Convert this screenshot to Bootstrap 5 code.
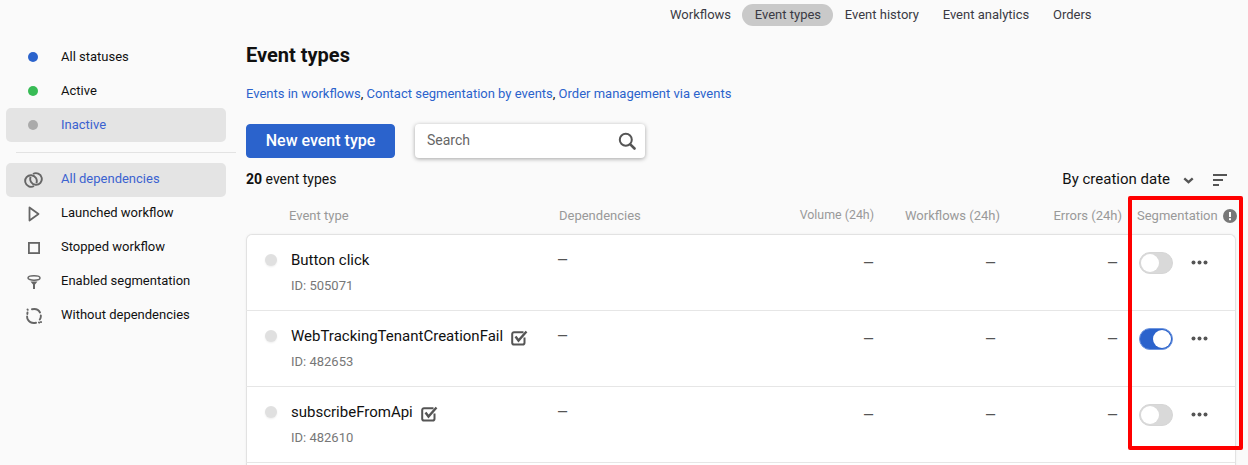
<!DOCTYPE html>
<html lang="en">
<head>
<meta charset="utf-8">
<title>Event types</title>
<link href="https://cdn.jsdelivr.net/npm/bootstrap@5.3.0/dist/css/bootstrap.min.css" rel="stylesheet">
<style>
html,body{height:465px;overflow:hidden}
body{background:#fafafa;font-family:Roboto,"Liberation Sans",sans-serif;font-size:13px;color:#111;position:relative}
a{text-decoration:none}
.topnav{height:29px;padding:4px 0 0 658px;gap:0}
.topnav a{display:block;height:22px;line-height:21px;padding:0 12px;color:#3a3a44;font-size:13px;border-radius:11px}
.topnav a:nth-child(n+2){margin-left:-.3px}
.topnav a.cur{background:#c9c9c9;padding-left:13px;margin-left:-1.3px}
.shell{display:flex}
.side{width:246px;flex:none;padding:11px 0 0 6px}
.sitem{display:flex;align-items:center;width:220px;height:34px;border-radius:5px;color:#111}
.sitem.cur{background:#e4e4e4;color:#3b62d0}
.sgroup2 .sitem{padding-bottom:2px}
.sgroup2 .sico{padding-top:2px}
.sico{width:55px;flex:none;display:flex;justify-content:center;color:#666}
.sdot{width:10px;height:10px;border-radius:50%;margin-left:-1px}
.sep{height:1px;background:#e3e3e3;margin:10px 0 10px 10px;width:220px}
.main{width:990px;flex:none}
.ttl{font-size:20px;font-weight:700;line-height:24px;margin:14px 0 0;color:#111}
.lnks{margin:19px 0 0;line-height:16px;color:#111;height:16px}
.lnks a{color:#2b63cc}
.acts{margin-top:22px;gap:20px}
.newbtn{width:149px;height:34px;padding:0 0 1px;background:#2b63cc;border-color:#2b63cc;font-size:16px;font-weight:500;line-height:30px;border-radius:4px}
.srch{width:230px;height:34px;background:#fff;border-radius:4px;box-shadow:0 1px 4px rgba(0,0,0,.35);padding:0 9px 1px 12px;color:#666;font-size:14px}
.srch svg{margin-top:1px}
.cnt{margin-top:13px;height:17px;line-height:17px;font-size:14px}
.sorter{font-size:15px;color:#111;margin-right:1px}
.schev{margin:2px 19px 0 13px}
.gridr{display:grid;grid-template-columns:43px 268px 206px 111px 126px 122px 1fr}
.hdr{height:39px;margin-top:7px;align-items:center;color:#999;font-size:13px;padding-top:2px}
.hdr .seg{padding-left:15px;display:flex;align-items:center;gap:5px;white-space:nowrap}
.hdep{padding-left:2px}
.hvol{font-size:12.4px}
.tr{text-align:right}
.tbl{background:#fff;border:1px solid #e2e2e2;border-bottom:0;border-radius:6px 6px 0 0;box-shadow:0 0 3px rgba(0,0,0,.05)}
.rw{height:76px;border-bottom:1px solid #e6e6e6;margin-left:-1px;padding-top:15px;align-items:start}
.rw.tail{height:3px;padding:0;border:0}
.rdot{width:12px;height:12px;border-radius:50%;background:#e0e0e0;margin:4px 0 0 19px;box-shadow:0 1px 2px rgba(0,0,0,.07)}
.nm{font-size:15px;line-height:21px;color:#111;padding-left:2px;display:flex;align-items:center;gap:8px;white-space:nowrap}
.nm svg{margin-top:2px}
.rid{font-size:13px;color:#777;line-height:16px;margin-top:7px;padding-left:2px}
.dsh{color:#555;line-height:20px;font-size:14px}
.dsh.r{text-align:right;padding:3px 4px 0 0}
.dsh.v{padding-right:0}
.ctl{padding-left:17px;display:flex;align-items:center;gap:18px;height:24px;margin-top:1px}
.form-switch{padding:0;margin:0;min-height:0;display:flex}
.form-switch .form-check-input.tgl{width:34px;height:22px;margin:0;border:1px solid #d6d6d6;background-color:#d9d9d9;background-size:20px 20px;background-position:left center;background-image:url("data:image/svg+xml,%3csvg xmlns='http://www.w3.org/2000/svg' viewBox='0 0 20 20'%3e%3ccircle cx='10' cy='10' r='9' fill='%23fff'/%3e%3c/svg%3e");border-radius:11px}
.form-switch .form-check-input.tgl:checked{background-color:#2b63cc;border-color:#6f96de;background-position:right center}
.more{display:block;margin-top:-2px}
.annot{position:absolute;left:1128px;top:196px;width:115px;height:254px;border:4px solid #f00;border-radius:2px;pointer-events:none}
</style>
</head>
<body>
<nav class="nav topnav">
  <a href="#">Workflows</a><a href="#" class="cur">Event types</a><a href="#">Event history</a><a href="#">Event analytics</a><a href="#">Orders</a>
</nav>
<div class="shell">
  <aside class="side">
    <div>
      <a href="#" class="sitem"><span class="sico"><span class="sdot" style="background:#2b63cc"></span></span>All statuses</a>
      <a href="#" class="sitem"><span class="sico"><span class="sdot" style="background:#37bb55"></span></span>Active</a>
      <a href="#" class="sitem cur"><span class="sico"><span class="sdot" style="background:#aaa"></span></span>Inactive</a>
    </div>
    <div class="sep"></div>
    <div class="sgroup2">
    <a href="#" class="sitem cur"><span class="sico"><svg width="19" height="16" viewBox="0 0 19 16" fill="none" stroke="#666" stroke-width="1.900"><path d="M12.350 11.230A5.800 5.800 0 1 0 10.020 13.950"/><path d="M8.980 2.050A5.800 5.800 0 1 1 6.650 4.770"/></svg></span>All dependencies</a>
    <a href="#" class="sitem"><span class="sico"><svg width="12" height="16" viewBox="0 0 12 16" fill="none" stroke="#666" stroke-width="1.800" stroke-linejoin="round"><path d="M1.500 1.500 10.500 8 1.500 14.500Z"/></svg></span>Launched workflow</a>
    <a href="#" class="sitem"><span class="sico"><svg width="12" height="12" viewBox="0 0 12 12" fill="none" stroke="#666" stroke-width="1.800"><rect x=".9" y=".9" width="10.200" height="10.200"/></svg></span>Stopped workflow</a>
    <a href="#" class="sitem"><span class="sico"><svg width="14" height="14" viewBox="0 0 14 14" fill="none"><ellipse cx="7" cy="3" rx="6" ry="2.200" stroke="#666" stroke-width="1.500"/><path d="M3.500 6.500h7L8 9.500V14H6V9.500Z" fill="#666"/></svg></span>Enabled segmentation</a>
    <a href="#" class="sitem"><span class="sico"><svg width="16" height="16" viewBox="0 0 16 16" fill="none" stroke="#666" stroke-width="1.900" stroke-linecap="round"><path d="M6 1.300C9 .7 12.500 1.500 14 4.500"/><path d="M1.500 1.500 1.800 1.800M1.500 4.500 1.300 6"/><path d="M14.800 7.500C15 9 14.500 10.500 13.800 11.500"/><path d="M10 14.800C6.500 15.500 3.500 14.500 1.800 11.500 1.200 10.500 1.100 9.500 1.100 8.500"/><path d="M13 14.500 13.200 14.700M15 14 15.100 14.100"/></svg></span>Without dependencies</a>
    </div>
  </aside>
  <main class="main">
    <h1 class="ttl">Event types</h1>
    <p class="lnks"><a href="#">Events in workflows</a>, <a href="#">Contact segmentation by events</a>, <a href="#">Order management via events</a></p>
    <div class="d-flex acts">
      <button type="button" class="btn btn-primary newbtn">New event type</button>
      <div class="srch d-flex align-items-center justify-content-between"><span>Search</span>
        <svg width="18" height="18" viewBox="0 0 18 18" fill="none" stroke="#555" stroke-width="2"><circle cx="7.800" cy="7.800" r="6"/><path d="M12.300 12.300 16.500 16.500" stroke-width="2.600" stroke-linecap="round"/></svg>
      </div>
    </div>
    <div class="d-flex justify-content-between align-items-center cnt">
      <div><b>20</b> event types</div>
      <div class="d-flex align-items-center sorter"><span>By creation date</span>
        <svg class="schev" width="11" height="7" viewBox="0 0 13 8" fill="none" stroke="#555" stroke-width="2.800"><path d="M1.500 1.500 6.500 6 11.500 1.500"/></svg>
        <svg class="me-2" width="14" height="12" viewBox="0 0 14 12" fill="#555"><rect width="14" height="2"/><rect y="5" width="10" height="2"/><rect y="10" width="6" height="2"/></svg>
      </div>
    </div>
    <div class="gridr hdr">
      <span></span><span>Event type</span><span class="hdep">Dependencies</span><span class="tr hvol">Volume (24h)</span><span class="tr">Workflows (24h)</span><span class="tr">Errors (24h)</span>
      <span class="seg">Segmentation
        <svg width="14" height="14" viewBox="0 0 14 14"><circle cx="7" cy="7" r="7" fill="#777"/><rect x="6" y="3" width="2" height="5" fill="#fff"/><rect x="6" y="9.200" width="2" height="2" fill="#fff"/></svg>
      </span>
    </div>
    <div class="tbl">
      <div class="gridr rw">
        <span class="rdot"></span>
        <div><div class="nm">Button click</div><div class="rid">ID: 505071</div></div>
        <span class="dsh">—</span><span class="dsh r v">—</span><span class="dsh r">—</span><span class="dsh r">—</span>
        <div class="ctl"><div class="form-check form-switch"><input class="form-check-input tgl" type="checkbox" role="switch" aria-label="Segmentation"></div>
          <svg class="more" width="17" height="5" viewBox="0 0 17 5" fill="#555"><circle cx="2.500" cy="2.500" r="2"/><circle cx="8.500" cy="2.500" r="2"/><circle cx="14.500" cy="2.500" r="2"/></svg></div>
      </div>
      <div class="gridr rw">
        <span class="rdot"></span>
        <div><div class="nm">WebTrackingTenantCreationFail
          <svg width="17" height="16" viewBox="0 0 17 16" fill="none" stroke="#555" stroke-width="2"><path d="M13.500 7.500v5.300a1.800 1.800 0 0 1-1.800 1.800H3a1.800 1.800 0 0 1-1.800-1.800V4A1.800 1.800 0 0 1 3 2.200h9.500"/><path d="M4.500 6.500 7.500 10.500 15.500 1.500" stroke-width="2.400"/></svg></div><div class="rid">ID: 482653</div></div>
        <span class="dsh">—</span><span class="dsh r v">—</span><span class="dsh r">—</span><span class="dsh r">—</span>
        <div class="ctl"><div class="form-check form-switch"><input class="form-check-input tgl" type="checkbox" role="switch" aria-label="Segmentation" checked></div>
          <svg class="more" width="17" height="5" viewBox="0 0 17 5" fill="#555"><circle cx="2.500" cy="2.500" r="2"/><circle cx="8.500" cy="2.500" r="2"/><circle cx="14.500" cy="2.500" r="2"/></svg></div>
      </div>
      <div class="gridr rw">
        <span class="rdot"></span>
        <div><div class="nm">subscribeFromApi
          <svg width="17" height="16" viewBox="0 0 17 16" fill="none" stroke="#555" stroke-width="2"><path d="M13.500 7.500v5.300a1.800 1.800 0 0 1-1.800 1.800H3a1.800 1.800 0 0 1-1.800-1.800V4A1.800 1.800 0 0 1 3 2.200h9.500"/><path d="M4.500 6.500 7.500 10.500 15.500 1.500" stroke-width="2.400"/></svg></div><div class="rid">ID: 482610</div></div>
        <span class="dsh">—</span><span class="dsh r v">—</span><span class="dsh r">—</span><span class="dsh r">—</span>
        <div class="ctl"><div class="form-check form-switch"><input class="form-check-input tgl" type="checkbox" role="switch" aria-label="Segmentation"></div>
          <svg class="more" width="17" height="5" viewBox="0 0 17 5" fill="#555"><circle cx="2.500" cy="2.500" r="2"/><circle cx="8.500" cy="2.500" r="2"/><circle cx="14.500" cy="2.500" r="2"/></svg></div>
      </div>
      <div class="gridr rw tail"></div>
    </div>
  </main>
</div>
<div class="annot"></div>
<script src="https://cdn.jsdelivr.net/npm/bootstrap@5.3.0/dist/js/bootstrap.bundle.min.js"></script>
</body>
</html>
